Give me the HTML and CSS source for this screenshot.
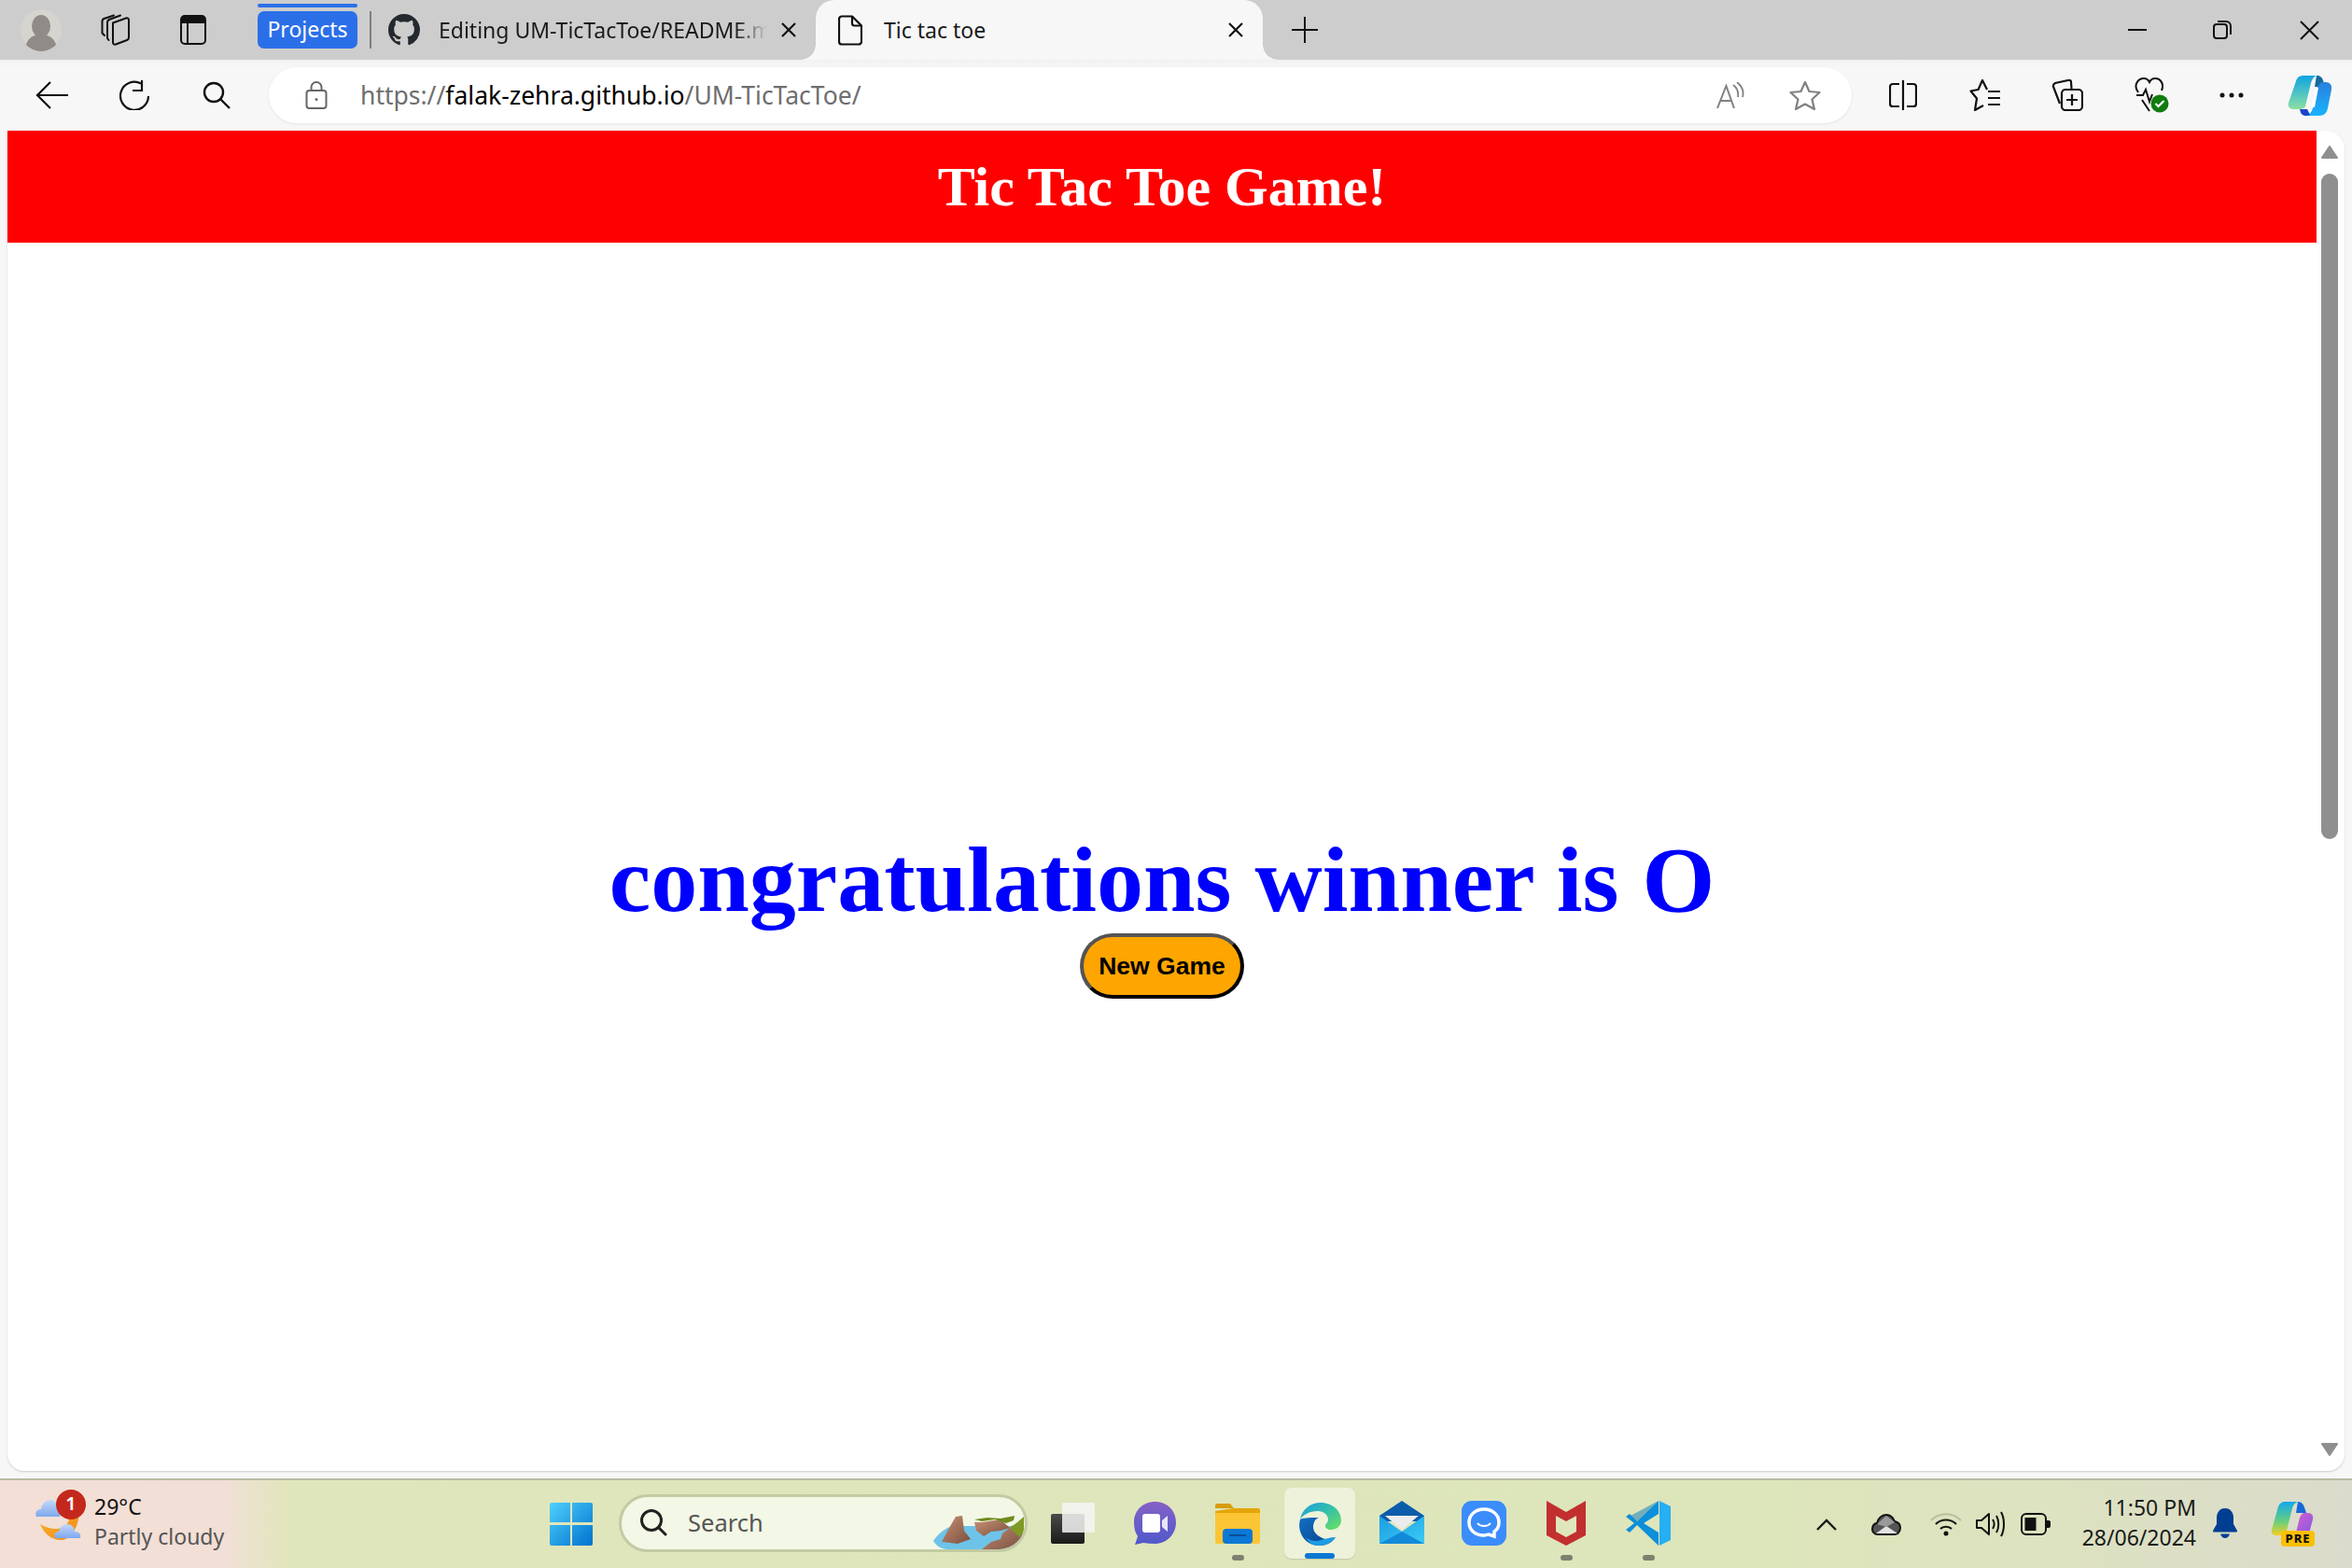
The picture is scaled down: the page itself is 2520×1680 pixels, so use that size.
FILE: index.html
```html
<!DOCTYPE html>
<html lang="en">
<head>
<meta charset="utf-8">
<title>Tic tac toe</title>
<link rel="stylesheet" href="styles.css">
</head>
<body>
<div class="window">
  <div class="tabstrip">
    <div class="slot s-avatar">
      <svg width="44" height="45" viewBox="0 0 44 45"><ellipse cx="22" cy="22.500" rx="22" ry="22.500" fill="#d5d4ce"/><ellipse cx="22" cy="18" rx="10" ry="12" fill="#8f8b87"/><path d="M6 38c2-8 9-11 16-11s14 3 16 11c-4 4-10 7-16 7S10 42 6 38z" fill="#8f8b87"/></svg>
    </div>
    <div class="slot s-coll">
      <svg width="34" height="34" viewBox="0 0 34 34" fill="none" stroke="#111" stroke-width="2" stroke-linejoin="round" stroke-linecap="round"><path d="M14 9.500 28 4.500c2-.5 3 .5 3 2V25c0 1.500-.5 2.500-2 3l-12 4.500c-2 .5-3-.5-3-2z"/><path d="M9.500 28 8 26V9c0-1.500 1-2.500 2-3L22 1.500"/><path d="M5 23 2.500 20.500V8c0-1.500.5-2.500 2-3L15 1.500"/></svg>
    </div>
    <div class="slot s-tabact">
      <svg width="28" height="32" viewBox="0 0 28 32"><rect x="1" y="1" width="26" height="30" rx="4" fill="none" stroke="#111" stroke-width="2"/><path d="M1 9V5a4 4 0 0 1 4-4h18a4 4 0 0 1 4 4v4z" fill="#111"/><path d="M8 9v22" stroke="#111" stroke-width="2"/></svg>
    </div>
    <div class="group-tab">
      <div class="group-bar"></div>
      <div class="group-pill">Projects</div>
    </div>
    <div class="tab-sep"></div>
    <div class="tab">
      <svg class="gh" width="34" height="34" viewBox="0 0 16 16"><path fill="#24292f" d="M8 0C3.580 0 0 3.580 0 8c0 3.540 2.290 6.530 5.470 7.590.4.070.55-.17.55-.38 0-.19-.01-.82-.01-1.490-2.010.37-2.530-.49-2.690-.94-.09-.23-.48-.94-.82-1.130-.28-.15-.68-.52-.01-.53.63-.01 1.080.58 1.230.82.72 1.210 1.870.87 2.330.66.070-.52.28-.87.51-1.070-1.780-.2-3.640-.89-3.640-3.950 0-.87.31-1.590.82-2.150-.08-.2-.36-1.020.08-2.120 0 0 .67-.21 2.200.82.64-.18 1.320-.27 2-.27.68 0 1.360.09 2 .27 1.530-1.040 2.200-.82 2.200-.82.44 1.100.16 1.920.08 2.120.51.56.82 1.270.82 2.150 0 3.070-1.870 3.750-3.650 3.950.29.25.54.73.54 1.480 0 1.070-.01 1.930-.01 2.200 0 .21.15.46.55.38A8.013 8.013 0 0 0 16 8c0-4.420-3.580-8-8-8z"/></svg>
      <span class="tab-title fade">Editing UM-TicTacToe/README.m</span>
      <svg class="tab-x" width="18" height="18" viewBox="0 0 18 18"><path d="M2 2l14 14M16 2 2 16" stroke="#111" stroke-width="2.200"/></svg>
    </div>
    <div class="tab tab-active">
      <svg class="doc" width="26" height="33" viewBox="0 0 26 33" fill="none" stroke="#111" stroke-width="2.200" stroke-linejoin="round"><path d="M15 1.500H4a3 3 0 0 0-3 3v24a3 3 0 0 0 3 3h18a3 3 0 0 0 3-3V11.500z"/><path d="M15 1.500V9a2.500 2.500 0 0 0 2.500 2.500H25"/></svg>
      <span class="tab-title">Tic tac toe</span>
      <svg class="tab-x" width="18" height="18" viewBox="0 0 18 18"><path d="M2 2l14 14M16 2 2 16" stroke="#111" stroke-width="2.200"/></svg>
    </div>
    <div class="newtab">
      <svg width="28" height="28" viewBox="0 0 28 28"><path d="M14 0v28M0 14h28" stroke="#111" stroke-width="2"/></svg>
    </div>
    <div class="winctrls">
      <div class="slot wc-min"><svg width="20" height="2" viewBox="0 0 20 2"><path d="M0 1h20" stroke="#111" stroke-width="2"/></svg></div>
      <div class="slot wc-max"><svg width="20" height="20" viewBox="0 0 20 20" fill="none" stroke="#111" stroke-width="2"><rect x="1" y="4" width="14" height="15" rx="3"/><path d="M5 1h9a5 5 0 0 1 5 5v9"/></svg></div>
      <div class="slot wc-close"><svg width="21" height="21" viewBox="0 0 21 21"><path d="M1 1l19 19M20 1 1 20" stroke="#111" stroke-width="2"/></svg></div>
    </div>
  </div>

  <div class="toolbar">
    <div class="slot tb">
      <svg width="36" height="30" viewBox="0 0 36 30" fill="none" stroke="#111" stroke-width="2.200"><path d="M1 15h34M16 1 2 15l14 14"/></svg>
    </div>
    <div class="slot tb">
      <svg width="34" height="32" viewBox="0 0 34 32" fill="none" stroke="#111" stroke-width="2.200"><path d="M24 3.500A15 15 0 1 0 32 17"/><path d="M25 0v11H15"/></svg>
    </div>
    <div class="slot tb">
      <svg width="30" height="30" viewBox="0 0 30 30" fill="none" stroke="#111" stroke-width="2.400"><circle cx="12" cy="12" r="10"/><path d="M19 19l10 10"/></svg>
    </div>
    <div class="address">
      <svg class="lock" width="24" height="30" viewBox="0 0 24 30" fill="none" stroke="#666" stroke-width="2"><rect x="1.500" y="10" width="21" height="19" rx="3"/><path d="M6.500 10V6.500a5.500 5.500 0 0 1 11 0V10"/><circle cx="12" cy="19.500" r="1.500" fill="#666" stroke="none"/></svg>
      <div class="url"><span class="url-dim">https://</span><span class="url-host">falak-zehra.github.io</span><span class="url-dim">/UM-TicTacToe/</span></div>
      <svg class="read" width="30" height="28" viewBox="0 0 30 28" fill="none" stroke="#808080" stroke-width="2"><path d="M1 28 10.500 4 19 28M4 20h13"/><path d="M18 3c4 3 6 7 5 13M22 0c5 4 8 9 6 16" stroke-width="1.800"/></svg>
      <svg class="star" width="34" height="32" viewBox="0 0 34 32" fill="none" stroke="#808080" stroke-width="2.200" stroke-linejoin="round"><path d="M17 2l4.500 10 11 1-8 7.500 2.500 10.500L17 25.500 7 31l2.500-10.500-8-7.500 11-1z"/></svg>
    </div>
    <div class="tb-right">
      <div class="slot tb">
        <svg width="30" height="32" viewBox="0 0 30 32" fill="none" stroke="#111" stroke-width="2.200"><path d="M15 0v32"/><path d="M11 4H4a3 3 0 0 0-3 3v18a3 3 0 0 0 3 3h7M19 4h7a3 3 0 0 1 3 3v18a3 3 0 0 1-3 3h-7"/></svg>
      </div>
      <div class="slot tb">
        <svg width="34" height="34" viewBox="0 0 34 34" fill="none" stroke="#111" stroke-width="2.200" stroke-linejoin="round"><path d="M19 11 14 1 9.500 11 1.500 12.500 8 20.500 6 33 15 28"/><path d="M20 13h13M20 20h13M20 27h13"/></svg>
      </div>
      <div class="slot tb">
        <svg width="34" height="34" viewBox="0 0 34 34" fill="none" stroke="#111" stroke-width="2.200"><path d="M9 26 2 8c-.5-2 0-3 2-4l14-3c2-.5 3 .5 3 2l.5 7"/><rect x="11" y="11" width="22" height="22" rx="4"/><path d="M22 16v12M16 22h12"/></svg>
      </div>
      <div class="slot tb">
        <svg class="heart" width="38" height="38" viewBox="0 0 38 38" fill="none"><path d="M5 16C-1 8 5 1 11 1c3 0 5 2 6 4 1-2 3-4 6-4 6 0 10 6 7 13M3 19h7l3-6 4 13 3-8M9 24l8 12" stroke="#111" stroke-width="2"/><circle cx="28" cy="28" r="9.500" fill="#107c10"/><path d="M23.500 28l3 3 6-6" stroke="#fff" stroke-width="2.200"/></svg>
      </div>
      <div class="slot tb">
        <svg width="26" height="6" viewBox="0 0 26 6" fill="#111"><circle cx="3" cy="3" r="2.500"/><circle cx="13" cy="3" r="2.500"/><circle cx="23" cy="3" r="2.500"/></svg>
      </div>
      <div class="slot tb-copilot">
        <svg width="48" height="44" viewBox="0 0 48 44"><defs><linearGradient id="cpa" x1="0" y1="0" x2="0" y2="1"><stop offset="0" stop-color="#11a4e0"/><stop offset=".6" stop-color="#58c8c0"/><stop offset="1" stop-color="#8be0a0"/></linearGradient><linearGradient id="cpb" x1="0" y1="0" x2="0" y2="1"><stop offset="0" stop-color="#2a7fdc"/><stop offset="1" stop-color="#18b4ff"/></linearGradient></defs><path d="M9 7c1-4 4-6 8-6h14c-3 1-5 4-6 8l-6 25c-1 2-3 3-6 3H6c-4 0-6-3-5-7z" fill="url(#cpa)"/><path d="M31 1c4 0 6 2 7 5l2 7H29z" fill="#146c9c"/><path d="M38 8h3c4 0 7 3 6 8l-4 20c-1 5-4 8-9 8H20c3-1 6-4 7-8l5-22c1-3 3-6 6-6z" fill="url(#cpb)"/><path d="M13 37h8l3 6c-1 .5-2 1-3 1h-2c-3 0-5-2-6-7z" fill="#1c44c8"/><path d="M30 14h3l-4 21h-4z" fill="#fff"/></svg>
      </div>
    </div>
  </div>

  <div class="stage">
    <div class="page">
      <main class="doc-area">
        <header class="banner"><h1>Tic Tac Toe Game!</h1></header>
        <section class="result">
          <h2>congratulations winner is O</h2>
          <button class="new-game" type="button">New Game</button>
        </section>
      </main>
      <div class="scrollbar">
        <svg width="18" height="14" viewBox="0 0 18 14"><path d="M9 1 1 13h16z" fill="#8f8f8f" stroke="#8f8f8f" stroke-linejoin="round" stroke-width="2"/></svg>
        <div class="thumb"></div>
        <svg class="sb-down" width="18" height="14" viewBox="0 0 18 14"><path d="M9 13 1 1h16z" fill="#8f8f8f" stroke="#8f8f8f" stroke-linejoin="round" stroke-width="2"/></svg>
      </div>
    </div>
  </div>

  <footer class="taskbar">
    <div class="weather">
      <div class="weather-icon">
        <svg width="50" height="45" viewBox="0 0 50 45"><defs><linearGradient id="wc" x1="0" y1="0" x2="0" y2="1"><stop offset="0" stop-color="#c4d9fb"/><stop offset="1" stop-color="#7ea8ec"/></linearGradient><linearGradient id="wm" x1="0" y1="0" x2="1" y2="1"><stop offset="0" stop-color="#fbb62c"/><stop offset="1" stop-color="#ef8a1a"/></linearGradient></defs><path d="M5 28c4 10 12 17 22 17 9 0 16-8 19-22 1-5-1-9-4-12l-6 8c1 8-5 13-13 14-7 0-13-2-18-5z" fill="url(#wm)"/><path d="M1 20c-2-4 0-8 5-8 1-6 5-10 10-10 4 0 7 3 8 8 2 1 3 6 2 10z" fill="url(#wc)"/><path d="M21 43c-2-4 0-7 4-7 1-5 5-8 9-8 5 0 8 4 8 8 5 0 7 3 6 7z" fill="url(#wc)"/></svg>
        <span class="badge">1</span>
      </div>
      <div class="weather-text">
        <div class="temp">29°C</div>
        <div class="cond">Partly cloudy</div>
      </div>
    </div>
    <div class="apps">
      <svg class="a-win" width="46" height="46" viewBox="0 0 46 46"><defs><linearGradient id="win" x1="0" y1="0" x2="1" y2="1"><stop offset="0" stop-color="#4fd0fb"/><stop offset="1" stop-color="#0072cf"/></linearGradient></defs><path d="M2 0h20v21H0V2a2 2 0 0 1 2-2zM24 0h20a2 2 0 0 1 2 2v19H24zM0 24h22v22H2a2 2 0 0 1-2-2zM24 24h22v20a2 2 0 0 1-2 2H24z" fill="url(#win)"/></svg>
      <div class="search">
        <svg class="search-ic" width="30" height="30" viewBox="0 0 30 30" fill="none" stroke="#222" stroke-width="3"><circle cx="13" cy="13" r="10.500"/><path d="M21 21l7 7" stroke-linecap="round"/></svg>
        <span class="search-label">Search</span>
        <svg class="search-art" width="98" height="37" viewBox="0 0 98 37"><defs><linearGradient id="rock" x1="0" y1="0" x2="1" y2="1"><stop offset="0" stop-color="#c79276"/><stop offset="1" stop-color="#7a4f3e"/></linearGradient></defs><path d="M0 28C4 22 10 16 20 12H84L98 20V37H16C8 37 3 33 0 28z" fill="#6ec4e8"/><path d="M9 29 17 14 24 2 31 1 33 17 40 26 26 31z" fill="url(#rock)"/><path d="M44 8H52L72 5 82 14 72 17 62 18 54 23 46 17z" fill="url(#rock)"/><path d="M44 5 58 3 72 4 87 1 86 6 78 9 66 5 52 7z" fill="#6f8a1e"/><path d="M52 37 62 29 72 26 74 20 84 12 92 9 96 14 95 28 88 37z" fill="url(#rock)"/><path d="M82 14 90 8 97 2 97 18 92 24z" fill="#7f9a24"/></svg>
      </div>
      <svg class="a-task" width="47" height="44" viewBox="0 0 47 44"><defs><linearGradient id="tv1" x1="0" y1="0" x2="0" y2="1"><stop offset="0" stop-color="#4a4a4a"/><stop offset="1" stop-color="#1a1a1a"/></linearGradient></defs><rect x="0" y="12" width="36" height="32" rx="2" fill="url(#tv1)"/><rect x="12" y="0" width="35" height="32" rx="1" fill="#f4f4f4" fill-opacity=".85"/></svg>
      <svg class="a-meet" width="45" height="46" viewBox="0 0 45 46"><defs><linearGradient id="mt" x1="0" y1="0" x2="0" y2="1"><stop offset="0" stop-color="#8661c5"/><stop offset="1" stop-color="#4f59cb"/></linearGradient></defs><path d="M22.500 0C36 0 45 10 45 22c0 13-10 23-23 23-4 0-8-.5-12-1l-9 2 3-9C1 33 0 28 0 22 0 10 9 0 22.500 0z" fill="url(#mt)"/><rect x="9" y="13" width="19" height="20" rx="3" fill="#fff"/><path d="M30 20l6-5v17l-6-5z" fill="#e8e4fa"/></svg>
      <div class="app-wrap a-explorer">
        <svg width="48" height="43" viewBox="0 0 48 43"><path d="M2 0h14l4 5h-20V2a2 2 0 0 1 2-2z" fill="#d89c08"/><path d="M0 8h46a2 2 0 0 1 2 2v31a2 2 0 0 1-2 2H2a2 2 0 0 1-2-2z" fill="#fcc536"/><path d="M0 8l20-3h26a2 2 0 0 1 2 2v3H0z" fill="#e5a50a"/><rect x="8" y="27" width="32" height="16" rx="4" fill="#0a78d4"/><path d="M15 34h18" stroke="#0a4f94" stroke-width="2"/></svg>
        <span class="run-dot"></span>
      </div>
      <div class="edge-btn">
        <svg width="46" height="46" viewBox="0 0 46 46"><defs><linearGradient id="eg1" x1="0" y1="0" x2="1" y2="1"><stop offset="0" stop-color="#1b9de2"/><stop offset=".5" stop-color="#35c1a8"/><stop offset="1" stop-color="#6fe25a"/></linearGradient><linearGradient id="eg2" x1="0" y1="0" x2="1" y2="1"><stop offset="0" stop-color="#1170c4"/><stop offset="1" stop-color="#0b3f88"/></linearGradient></defs><path d="M2 18C4 7 13 0 24 0c13 0 22 9 22 19 0 6-5 10-11 10-4 0-6-2-6-4 0-3 3-3 3-7 0-5-5-9-11-9-9 0-16 4-19 9z" fill="url(#eg1)"/><path d="M2 18C-2 32 8 46 22 46c8 0 14-3 18-9-5 3-11 3-16 0-6-3-10-9-7-16 1-3 3-4 5-5-7 0-16 0-20 2z" fill="url(#eg2)"/><path d="M40 37c-4 6-10 9-18 9-7 0-12-4-14-9 4 4 11 5 16 3 5-1 10-3 16-3z" fill="#1b9de2"/></svg>
        <span class="run-bar"></span>
      </div>
      <svg class="a-mail" width="48" height="46" viewBox="0 0 48 46"><defs><linearGradient id="ml" x1="0" y1="0" x2="1" y2="1"><stop offset="0" stop-color="#1b9ce2"/><stop offset="1" stop-color="#3ccbf4"/></linearGradient></defs><path d="M24 0l24 16v6H0v-6z" fill="#0b5cab"/><path d="M6 16h36L24 31z" fill="#ececec"/><path d="M0 16l24 17 24-17v30H0z" fill="url(#ml)"/><path d="M0 46 24 33 48 46z" fill="#118ad8"/></svg>
      <svg class="a-chat" width="48" height="48" viewBox="0 0 48 48"><rect width="48" height="48" rx="11" fill="#3b8dfb"/><path d="M24 9c9 0 16 6 16 14 0 4-2 8-5 10v5l-6-2c-1 0-3 1-5 1-10 0-16-6-16-14S15 9 24 9z" fill="none" stroke="#fff" stroke-width="3.500"/><path d="M17 24c3 4 11 4 14 0" fill="none" stroke="#fff" stroke-width="2"/></svg>
      <div class="app-wrap a-mcafee">
        <svg width="42" height="48" viewBox="0 0 42 48"><path d="M0 0l21 12L42 0v37L21 48 0 37z" fill="#c22f2f"/><path d="M10 16l11 6 11-6v17l-11 6-11-6z" fill="#dfe6bb"/></svg>
        <span class="run-dot"></span>
      </div>
      <div class="app-wrap a-code">
        <svg width="48" height="48" viewBox="0 0 48 48"><path d="M35 0 12 22 4 14 0 17l9 7-9 7 4 3 8-8 23 22z" fill="#0d8fd9"/><path d="M35 0 12 22 5 16l30-16z" fill="#0a79bb" fill-opacity=".5"/><path d="M35 14v20L19 24z" fill="#dfe6bb"/><path d="M36 0l12 6v36l-12 6z" fill="#26aff2"/></svg>
        <span class="run-dot"></span>
      </div>
    </div>
    <div class="tray">
      <svg class="t-chev" width="22" height="13" viewBox="0 0 22 13" fill="none" stroke="#1a1a1a" stroke-width="2.400"><path d="M1 12 11 2l10 10"/></svg>
      <svg class="t-cloud" width="32" height="24" viewBox="0 0 32 24"><path d="M7 23C3 23 1 20 1 17c0-3 2-6 5-6 1-5 5-9 10-9 4 0 7 2 9 7 4 1 6 4 6 7 0 4-3 7-6 7z" fill="#555" stroke="#111" stroke-width="2"/><path d="M5 22l11-8 12 8z" fill="#e4e4e4"/><path d="M6 12l10-9 9 7-9 5z" fill="#9a9a9a"/></svg>
      <svg class="t-wifi" width="34" height="26" viewBox="0 0 34 26" fill="none"><path d="M1 9C10 0 24 0 33 9" stroke="#b8bd9f" stroke-width="2"/><path d="M6 13c6-6 16-6 22 0M11 18c3-3 9-3 12 0" stroke="#111" stroke-width="2.200"/><circle cx="17" cy="23" r="2.500" fill="#111"/></svg>
      <svg class="t-vol" width="32" height="30" viewBox="0 0 32 30" fill="none" stroke="#111" stroke-width="2"><path d="M1 11v8h5l8 7V4L6 11z" stroke-linejoin="round"/><path d="M18 10c2 3 2 7 0 10M22 6c3 5 3 13 0 18M27 2c4 7 4 19 0 26"/></svg>
      <svg class="t-bat" width="32" height="24" viewBox="0 0 32 24"><rect x="1" y="1" width="26" height="22" rx="5" fill="none" stroke="#111" stroke-width="2"/><rect x="4.500" y="5" width="12" height="14" fill="#111"/><path d="M28 8h2a2 2 0 0 1 2 2v4a2 2 0 0 1-2 2h-2z" fill="#111"/></svg>
      <div class="clock">
        <div>11:50 PM</div>
        <div>28/06/2024</div>
      </div>
      <svg class="t-bell" width="26" height="34" viewBox="0 0 26 34"><path d="M13 0c6 0 9 5 9 10v7l4 7c0 1-.5 1.500-1 1.500H1c-.5 0-1-.5-1-1.500l4-7v-7C4 5 7 0 13 0z" fill="#003e92"/><path d="M8 27.500h10c-1 3-3 4.500-5 4.500s-4-1.500-5-4.500z" fill="#003e92"/></svg>
      <div class="t-copilot">
        <svg width="46" height="42" viewBox="0 0 46 42"><defs><linearGradient id="c1" x1="0" y1="0" x2="0" y2="1"><stop offset="0" stop-color="#12a8ec"/><stop offset=".6" stop-color="#6ad07c"/><stop offset="1" stop-color="#f4d020"/></linearGradient><linearGradient id="c2" x1="0" y1="0" x2="1" y2="1"><stop offset="0" stop-color="#e25cc8"/><stop offset="1" stop-color="#7b5ce8"/></linearGradient></defs><path d="M8 5c1-3 4-5 7-5h14c-3 1-5 3-6 7l-6 24c-1 3-3 5-6 5H6c-4 0-6-3-5-6z" fill="url(#c1)"/><path d="M29 0c4 0 6 3 7 6l2 6H27z" fill="#1668d8"/><path d="M36 12h4c4 0 6 3 5 7l-4 15c-1 4-4 6-7 6H20c3-1 6-3 7-7l4-16c1-3 3-5 5-5z" fill="url(#c2)"/></svg>
        <span class="pre">PRE</span>
      </div>
    </div>
  </footer>
</div>
</body>
</html>
```
FILE: styles.css
```css
* { box-sizing: border-box; }
html, body { margin: 0; height: 100%; }
body { overflow: hidden; font-family: "Noto Sans", "Open Sans", sans-serif; color: #1a1a1a; background: #f7f7f7; }
svg { display: block; flex: none; }

.window { display: flex; flex-direction: column; width: 2520px; height: 1680px; }
.slot { display: flex; align-items: center; justify-content: center; flex: none; }

/* tab strip */
.tabstrip { display: flex; align-items: center; height: 64px; background: #cdcdcd; flex: none; }
.s-avatar { width: 88px; }
.s-coll { width: 72px; }
.s-tabact { width: 94px; }
.group-tab { display: flex; flex-direction: column; gap: 4px; margin-left: 22px; width: 107px; height: 64px; padding-top: 4px; }
.group-bar { height: 4px; background: #2b6fe8; border-radius: 2px; }
.group-pill { height: 40px; background: #2b6fe8; border-radius: 7px; color: #fff; font-size: 23px; line-height: 38px; text-align: center; }
.tab-sep { width: 2px; height: 40px; background: #7f7f7f; margin-left: 13px; }
.tab { display: flex; align-items: center; width: 476px; height: 64px; padding-left: 18px; position: relative; font-size: 23px; }
.gh { margin-right: 20px; }
.tab-title { white-space: nowrap; width: 352px; flex: none; }
.fade { -webkit-mask-image: linear-gradient(to right, #000 90%, transparent 100%); mask-image: linear-gradient(to right, #000 90%, transparent 100%); }
.tab-x { margin-left: 14px; }
.tab-active { width: 479px; padding-left: 24px; background: #f7f7f7; border-radius: 20px 20px 0 0; }
.tab-active::before, .tab-active::after { content: ""; position: absolute; bottom: 0; width: 16px; height: 16px; }
.tab-active::before { right: 100%; background: radial-gradient(circle at 0 0, transparent 15.500px, #f7f7f7 16px); }
.tab-active::after { left: 100%; background: radial-gradient(circle at 100% 0, transparent 15.500px, #f7f7f7 16px); }
.doc { margin-right: 23px; }
.tab-active .tab-title { width: 354px; }
.newtab { margin-left: 31px; }
.winctrls { display: flex; margin-left: auto; }
.wc-min { width: 88px; }
.wc-max { width: 94px; }
.wc-close { width: 92px; }

/* toolbar */
.toolbar { display: flex; align-items: center; height: 76px; padding-left: 12px; background: linear-gradient(#f1f1f1, #f7f7f7 8px); flex: none; }
.tb { width: 88px; }
.heart { margin-left: 3px; }
.address { display: flex; align-items: center; width: 1696px; height: 60px; margin-left: 12px; padding-left: 39px; background: #fff; border-radius: 30px; box-shadow: 0 1px 3px rgba(0,0,0,.08); }
.lock { margin-right: 35px; }
.url { font-size: 26.500px; white-space: nowrap; flex: 1; }
.url-dim { color: #6e6e6e; }
.url-host { color: #000; }
.read { margin-right: 48px; }
.star { margin-right: 33px; }
.tb-right { display: flex; align-items: center; margin-left: 11px; }
.tb-copilot { width: 80px; }

/* page */
.stage { flex: 1; padding: 0 8px 8px; border-bottom: 2px solid #b8bba3; min-height: 0; }
.page { display: flex; height: 100%; background: #fff; border-radius: 0 20px 18px 18px; box-shadow: 0 1px 2px rgba(0,0,0,.18); overflow: hidden; }
.doc-area { flex: 1; min-width: 0; }
.banner { height: 120px; background: #f00; display: flex; align-items: center; justify-content: center; }
.banner h1 { margin: 0; color: #fff; font: bold 60px "Liberation Serif", serif; }
.result { display: flex; flex-direction: column; align-items: center; padding-top: 628px; }
.result h2 { margin: 0 0 2px; color: #00f; font: bold 100px/110px "Liberation Serif", serif; }
.new-game { width: 176px; height: 70px; padding: 0; background: #ffa500; border: 4px outset #000; border-radius: 35px; color: #000; font: bold 26.500px "Liberation Sans", sans-serif; }
.scrollbar { display: flex; flex-direction: column; align-items: center; width: 30px; padding: 16px 2px 16px 0; }
.thumb { width: 18px; height: 713px; margin-top: 16px; background: #8f8f8f; border-radius: 9px; }
.sb-down { margin-top: auto; }

/* taskbar */
.taskbar { display: flex; align-items: flex-start; height: 94px; flex: none; background: linear-gradient(90deg, #f3dfd6 0, #f2dfd6 240px, #e0e6bb 310px, #dde5bb 1900px, #dde2c0 2200px, #dbdbcc 2520px); }
.weather { display: flex; width: 589px; padding: 10px 0 0 38px; flex: none; }
.weather-icon { position: relative; width: 63px; height: 60px; padding-top: 9px; }
.badge { position: absolute; left: 22px; top: 0; width: 32px; height: 32px; border-radius: 50%; background: #c4281c; color: #fff; font-size: 20px; font-weight: 600; line-height: 30px; text-align: center; }
.weather-text { font-size: 23px; line-height: 32px; }
.temp { color: #111; margin-top: 2px; }
.cond { color: #555; }

.apps { display: flex; align-items: flex-start; }
.a-win { margin: 24px 0 0 0; }
.search { display: flex; align-items: center; width: 438px; height: 62px; margin: 15px 0 0 28px; padding: 0 0 3px 19px; background: #f3f7e6; border: 3px solid #c2caa2; border-radius: 31px; position: relative; overflow: hidden; }
.search-ic { margin-right: 22px; }
.search-label { font-size: 25.500px; color: #555; }
.search-art { position: absolute; right: 0; bottom: 0; }
.a-task { margin: 24px 0 0 25px; }
.a-meet { margin: 23px 0 0 42px; }
.app-wrap { display: flex; flex-direction: column; align-items: center; }
.a-explorer { margin: 25px 0 0 42px; width: 48px; }
.run-dot { width: 13px; height: 6px; margin-top: 12px; border-radius: 3px; background: #7d8270; }
.edge-btn { display: flex; flex-direction: column; align-items: center; width: 76px; height: 76px; margin: 8px 0 0 26px; padding-top: 16px; background: #eef2db; border-radius: 8px; box-shadow: 0 1px 1px rgba(0,0,0,.12); }
.run-bar { width: 32px; height: 6px; margin-top: 8px; border-radius: 3px; background: #0a78d4; }
.a-mail { margin: 22px 0 0 26px; }
.a-chat { margin: 22px 0 0 40px; }
.a-mcafee { margin: 22px 0 0 43px; width: 42px; }
.a-mcafee .run-dot { margin-top: 10px; }
.a-code { margin: 22px 0 0 43px; width: 48px; }
.a-code .run-dot { margin-top: 10px; }

.tray { display: flex; align-items: center; height: 94px; margin-left: auto; padding-right: 40px; }
.t-chev { margin-right: 37px; }
.t-cloud { margin-right: 31px; }
.t-wifi { margin-right: 15px; }
.t-vol { margin-right: 16px; }
.t-bat { margin-right: 0; }
.clock { width: 156px; margin-bottom: 5px; text-align: right; font-size: 23px; line-height: 32px; color: #1a1a1a; }
.t-bell { margin: 0 36px 0 18px; }
.t-copilot { position: relative; width: 47px; height: 48px; }
.pre { position: absolute; left: 11px; bottom: 0; width: 36px; height: 17px; background: #fbbf00; border-radius: 4px; color: #111; font-size: 13px; font-weight: 800; line-height: 17px; text-align: center; letter-spacing: 1px; }
```
